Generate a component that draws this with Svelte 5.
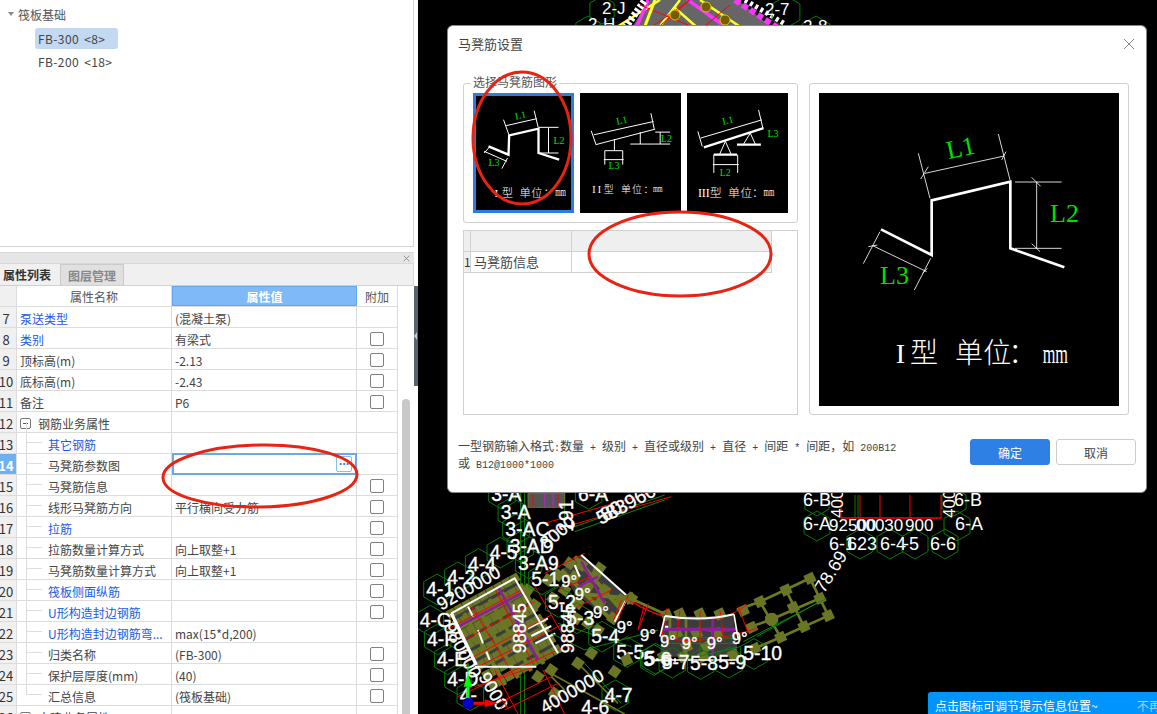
<script>
  // property rows: n = row no, name, val, link = blue label, level = tree depth, check = has checkbox
  const rows = [
    { n: 7, name: "泵送类型", val: "(混凝土泵)", link: true, level: 0, check: false },
    { n: 8, name: "类别", val: "有梁式", link: true, level: 0, check: true },
    { n: 9, name: "顶标高(m)", val: "-2.13", level: 0, check: true },
    { n: 10, name: "底标高(m)", val: "-2.43", level: 0, check: true },
    { n: 11, name: "备注", val: "P6", level: 0, check: true },
    { n: 12, name: "钢筋业务属性", val: "", level: 0, group: true, check: false },
    { n: 13, name: "其它钢筋", val: "", link: true, level: 1, check: false },
    { n: 14, name: "马凳筋参数图", val: "", level: 1, check: false, active: true },
    { n: 15, name: "马凳筋信息", val: "", level: 1, check: true },
    { n: 16, name: "线形马凳筋方向", val: "平行横向受力筋", level: 1, check: true },
    { n: 17, name: "拉筋", val: "", link: true, level: 1, check: true },
    { n: 18, name: "拉筋数量计算方式", val: "向上取整+1", level: 1, check: true },
    { n: 19, name: "马凳筋数量计算方式", val: "向上取整+1", level: 1, check: true },
    { n: 20, name: "筏板侧面纵筋", val: "", link: true, level: 1, check: true },
    { n: 21, name: "U形构造封边钢筋", val: "", link: true, level: 1, check: true },
    { n: 22, name: "U形构造封边钢筋弯...", val: "max(15*d,200)", link: true, level: 1, check: false },
    { n: 23, name: "归类名称", val: "(FB-300)", level: 1, check: true },
    { n: 24, name: "保护层厚度(mm)", val: "(40)", level: 1, check: true },
    { n: 25, name: "汇总信息", val: "(筏板基础)", level: 1, check: true, last: true },
    { n: 26, name: "土建业务属性", val: "", level: 0, group: true, check: false }
  ];

  const hex = (x, y, r) =>
    [0, 1, 2, 3, 4, 5]
      .map((i) => {
        const a = (Math.PI / 3) * i + Math.PI / 6;
        return `${(x + r * Math.cos(a)).toFixed(1)},${(y + r * Math.sin(a)).toFixed(1)}`;
      })
      .join(" ");

  // left sector of the drawing, coords are 3x page px from (418,490)
  const leftLabels = [
    ["3-A", 220, 32], ["6-A", 480, 32], ["3-A", 248, 88], ["3-AC", 262, 138], ["3-AD", 275, 190],
    ["3-A9", 300, 240], ["4-5", 215, 208], ["4-4", 150, 242], ["4-2", 88, 282], ["4-1", 25, 318],
    ["4-G", 5, 412], ["4-F", 27, 468], ["4-E", 57, 528], ["4-D", 88, 588], ["4-", 125, 636],
    ["5-1", 340, 288], ["5-2", 390, 356], ["5-3", 445, 405], ["5-4", 520, 460], ["5-5", 595, 506],
    ["5-6", 680, 526], ["4-7", 560, 636]
  ];
  const mainA = [100, 370], mainU = [190, -105], mainV = [125, 215];
  const leftBlocks = [];
  for (let i = 0; i <= 8; i++) {
    for (let j = 0; j <= 7; j++) {
      leftBlocks.push([
        mainA[0] + (mainU[0] * i) / 8 + (mainV[0] * j) / 7,
        mainA[1] + (mainU[1] * i) / 8 + (mainV[1] * j) / 7
      ]);
    }
  }
  const sectorBlocks = [
    [490, 225], [530, 260], [560, 300], [610, 330], [470, 260], [510, 290], [545, 340], [585, 385],
    [440, 300], [480, 340], [510, 400], [330, 300], [390, 270], [350, 345], [540, 420], [480, 520],
    [400, 540], [590, 545], [520, 490], [410, 610], [360, 560], [455, 220], [420, 255], [640, 325],
    [545, 235], [475, 385], [365, 395], [405, 325]
  ];

  // right sector, coords are 3x page px from (600,490)
  const rightLabels = [
    ["5-6", 130, 528], ["5-7", 185, 536], ["5-8", 270, 540], ["5-9", 355, 536], ["5-10", 430, 510]
  ];
  const degLabels = [[50, 428], [120, 452], [180, 472], [245, 478], [320, 478], [395, 462]];
  const rightBlocks = [
    [480, 335], [558, 300], [630, 265], [580, 352], [660, 325], [515, 388], [612, 410], [685, 377],
    [542, 442], [465, 475], [430, 362], [455, 412], [200, 375], [240, 372], [300, 372], [360, 372],
    [190, 500], [250, 500], [310, 500], [400, 495], [90, 325], [80, 510], [230, 430], [290, 430],
    [350, 430], [260, 470], [320, 470]
  ];
</script>

<div class="page">
  <aside class="left">
    <div class="left-main">
      <div class="tree">
        <div class="tree-root"><span class="caret"></span>筏板基础</div>
        <div class="tree-item selected">FB-300 &lt;8&gt;</div>
        <div class="tree-item">FB-200 &lt;18&gt;</div>
      </div>

      <div class="dock-bar">
        <svg class="dock-close" viewBox="0 0 10 10"><path d="M1 1l8 8M9 1l-8 8" /></svg>
      </div>
      <div class="tabs">
        <div class="tab active">属性列表</div>
        <div class="tab">图层管理</div>
      </div>

      <div class="table-wrap">
        <div class="table">
          <div class="row head">
            <div class="c-no"></div>
            <div class="c-name">属性名称</div>
            <div class="c-val hl">属性值</div>
            <div class="c-add">附加</div>
          </div>
          {#each rows as r}
            <div class="row">
              <div class="c-no" class:cur={r.active}>{r.n}</div>
              <div class="c-name cell" class:lv1={r.level === 1} class:link={r.link}>
                {#if r.level === 1}
                  <span class="branch" class:end={r.last}></span>
                {/if}
                {#if r.group}
                  <span class="minus"></span>
                {/if}
                {r.name}
              </div>
              <div class="c-val cell">
                {r.val}
                {#if r.active}
                  <span class="editor"><span class="more">...</span></span>
                {/if}
              </div>
              <div class="c-add">
                {#if r.check}<span class="check"></span>{/if}
              </div>
            </div>
          {/each}
        </div>
        <div class="scroll"><div class="thumb"></div></div>
      </div>
    </div>
    <div class="splitter">
      <div class="grip"></div>
    </div>
  </aside>

  <main class="canvas">
    <svg class="cad" viewBox="418 0 739 714">
      <!-- top part, mostly hidden by the dialog -->
      <polygon points="650,0 738,0 775,30 630,30" fill="#666" />
      <path d="M612,30L660,0M700,0L745,30M675,8L700,30M657,30L680,0" stroke="#ffff33" stroke-width="2.5" fill="none" />
      <path d="M648,0L636,28M688,0L730,30" stroke="#ff33ff" stroke-width="3.5" fill="none" />
      <path d="M735,0L778,28" stroke="#ff33ff" stroke-width="6" stroke-dasharray="6 3" fill="none" />
      <path d="M745,0L785,24" stroke="#fff" stroke-width="5" stroke-dasharray="3 3" fill="none" />
      <path d="M625,28L645,0" stroke="#fff" stroke-width="7" stroke-dasharray="3 2" fill="none" />
      <path d="M640,5L700,30M690,0L655,30M650,28L690,0M730,5L700,30" stroke="#f00" fill="none" />
      <path d="M655,0L645,26" stroke="#ffff33" stroke-width="3" fill="none" />
      <circle cx="675" cy="15" r="5" fill="#7a5a00" stroke="#cc0" />
      <circle cx="706" cy="7" r="5" fill="#7a5a00" stroke="#cc0" />
      <circle cx="725" cy="20" r="5" fill="#7a5a00" stroke="#cc0" />
      <g fill="none" stroke="#0a7a0a">
        <polygon points={hex(602, 10, 14)} />
        <polygon points={hex(588, 30, 14)} />
        <polygon points={hex(786, 12, 16)} />
        <polygon points={hex(816, 32, 16)} />
      </g>
      <g class="lbl" font-size="17">
        <text x="602" y="14">2-J</text>
        <text x="588" y="30">2-H</text>
        <text x="765" y="15">2-7</text>
        <text x="803" y="32">2-8</text>
      </g>

      <!-- 6-x axis block on the right -->
      <path d="M841,495V518H941V495M841,518H941M860,495V518M880,495V518M910,495V518" stroke="#f00" fill="none" />
      <path d="M855,495V518M858,495V518" stroke="#0a7a0a" fill="none" />
      <g fill="none" stroke="#0a7a0a">
        <polygon points={hex(817, 502, 14)} />
        <polygon points={hex(817, 526, 15)} />
        <polygon points={hex(957, 526, 15)} />
        <polygon points={hex(954, 502, 14)} />
        <polygon points={hex(945, 544, 15)} />
        <polygon points={hex(860, 544, 15)} />
        <polygon points={hex(890, 544, 15)} />
        <polygon points={hex(915, 544, 15)} />
      </g>
      <g class="lbl" font-size="18">
        <text x="803" y="506">6-B</text>
        <text x="803" y="530">6-A</text>
        <text x="954" y="506">6-B</text>
        <text x="955" y="530">6-A</text>
        <text x="829" y="531" font-size="17">92500</text>
        <text x="856" y="531" font-size="17">00030</text>
        <text x="905" y="531" font-size="17">900</text>
        <text x="829" y="550">6-1</text>
        <text x="847" y="550">623</text>
        <text x="880" y="550">6-4</text>
        <text x="903" y="550">-5</text>
        <text x="930" y="550">6-6</text>
        <text transform="translate(843 518) rotate(-90)" font-size="17">4000</text>
        <text transform="translate(955 518) rotate(-90)" font-size="17">4000</text>
        <text transform="translate(824 594) rotate(-58)" font-size="18">78.69</text>
      </g>

      <!-- left wing: radial grid and slabs -->
      <g transform="translate(418 490) scale(0.3333)">
        <path d="M380,100L760,-10M390,125L760,20M410,10L760,-50" stroke="#f00" stroke-width="3" fill="none" />
        <path d="M470,125L740,30M470,110L740,15" stroke="#0a8a0a" stroke-width="3" fill="none" />
        <path d="M308,0V672M320,0V672M440,0V120" stroke="#0a8a0a" stroke-width="3" fill="none" />
        <rect x="330" y="10" width="110" height="42" fill="#555" stroke="#6e7a1c" stroke-width="3" />
        <path d="M380,10V52M405,10V52" stroke="#a030b0" stroke-width="5" />
        <path d="M345,10V52M420,10V52" stroke="#f00" stroke-width="3" />

        <polygon points="100,370 290,265 415,480 355,525 170,525" fill="#3c3c3c" />
        <polygon points="490,195 630,325 590,400 470,310 430,240" fill="#3c3c3c" />
        <g stroke="#6e7a1c" stroke-width="12" fill="none">
          <path d="M125,413L315,308M150,456L340,351M175,499L365,394M138,370L262,585" />
          <path d="M176,349L301,564M214,328L340,543M252,307L377,522" />
          <path d="M430,240L590,400M470,200L610,360M470,310L630,325" />
        </g>
        {#each leftBlocks as b}
          <rect x={b[0] - 13} y={b[1] - 13} width="26" height="26" fill="#6b7526" transform="rotate(-29 {b[0]} {b[1]})" />
        {/each}
        {#each sectorBlocks as b}
          <rect x={b[0] - 15} y={b[1] - 15} width="30" height="30" fill="#6b7526" transform="rotate(35 {b[0]} {b[1]})" />
        {/each}
        <path d="M380,540L620,672M480,520L600,640M400,560L440,600" stroke="#6b7526" stroke-width="5" fill="none" />
        <path d="M240,290L360,510M490,215L560,340M120,410L310,310M480,290L540,260" stroke="#8a1f9c" stroke-width="8" fill="none" />
        <path d="M330,415L390,385M340,438L400,408M352,460L412,430M180,420L195,460M150,350L165,380M205,485L215,510M470,225L485,260" stroke="#fff" stroke-width="6" fill="none" />
        <g stroke="#f00" stroke-width="3" fill="none">
          <path d="M85,420L310,300M110,465L350,335M140,515L400,375M170,535L440,400" />
          <path d="M160,350L290,560M230,295L350,530M290,265L420,490M340,270L460,480" />
          <path d="M120,620L440,470M170,590L350,530M240,640L400,560M260,660L420,580M230,540L300,672M375,540L440,672" />
          <path d="M380,250L500,190M420,300L520,260M460,360L580,300M490,195L640,330C680,360 720,375 750,385M680,340L660,420M610,330L585,395" />
        </g>
        <g stroke="#fff" stroke-width="6" fill="none">
          <path d="M100,370L290,265L420,490M170,530H355M490,195L630,320L590,395" />
        </g>
        <path d="M100,370L175,525" stroke="#fff" stroke-width="10" />
        <g fill="none" stroke="#0a7a0a" stroke-width="3">
          {#each leftLabels as l}
            <polygon points={hex(l[1] + 32, l[2] - 20, 46)} />
          {/each}
        </g>
        <path d="M400,430L500,480L720,420M420,400L640,470M500,520L610,640" stroke="#0a8a0a" stroke-width="3" fill="none" />
        <g class="lbl heavy" font-size="58">
          {#each leftLabels as l}
            <text x={l[1]} y={l[2]}>{l[0]}</text>
          {/each}
          <text transform="translate(70 362) rotate(-30)" font-size="54">9200000</text>
          <text transform="translate(75 410) rotate(62)" font-size="54">980000</text>
          <text transform="translate(180 560) rotate(60)" font-size="54">9000</text>
          <text transform="translate(385 180) rotate(-40)" font-size="54">8000</text>
          <text transform="translate(380 672) rotate(-30)" font-size="54">4000000</text>
          <text transform="translate(548 105) rotate(-28)" font-size="58">583960</text>
          <text transform="translate(560 95) rotate(-28)" font-size="58">80</text>
          <text transform="translate(465 125) rotate(-90)" font-size="58">191</text>
          <text transform="translate(325 490) rotate(-90)" font-size="54">98845</text>
          <text transform="translate(468 490) rotate(-90)" font-size="54">98845</text>
          <text x="430" y="290" font-size="50">9°</text>
          <text x="470" y="330" font-size="50">9°</text>
          <text x="525" y="385" font-size="50">9°</text>
          <text x="490" y="672">4-6</text>
        </g>

        <!-- axis gizmo -->
        <path d="M150,640V590" stroke="#00ff00" stroke-width="9" />
        <polygon points="150,552 137,590 163,590" fill="#00ff00" />
        <path d="M150,555V520" stroke="#00ff00" stroke-width="3" />
        <path d="M150,640H200" stroke="#ff0000" stroke-width="9" />
        <polygon points="240,640 200,628 200,652" fill="#ff0000" />
        <circle cx="150" cy="640" r="17" fill="#0000c8" />
        <path d="M248,625L270,655M270,625L248,655" stroke="#ff0000" stroke-width="3" />
      </g>

      <!-- arc wing -->
      <g transform="translate(600 490) scale(0.3333)">
        <polygon points="190,380 400,378 415,500 180,500" fill="#3c3c3c" />
        <g stroke="#6e7a1c" stroke-width="8" fill="none">
          <path d="M258,385V500M210,385V450M320,420H390" />
          <path d="M480,335L630,265M515,388L660,325M542,442L685,377M480,335L542,442M558,300L612,410M630,265L685,377" />
          <path d="M90,325L190,370M410,360L480,335M440,415L515,388M465,475L542,442" />
        </g>
        {#each rightBlocks as b}
          <rect x={b[0] - 15} y={b[1] - 15} width="30" height="30" fill="#6b7526" transform="rotate(-25 {b[0]} {b[1]})" />
        {/each}
        <circle cx="515" cy="388" r="20" fill="#6b7526" />
        <path d="M190,418H412" stroke="#8a1f9c" stroke-width="10" />
        <path d="M338,385V500" stroke="#8a1f9c" stroke-width="9" />
        <g stroke="#0a8a0a" stroke-width="3" fill="none">
          <path d="M185,440L410,445M190,460L420,460M250,510L420,470M470,440L650,340M430,455L680,325M300,400V500" />
        </g>
        <g stroke="#f00" stroke-width="3" fill="none">
          <path d="M85,330C140,365 190,385 300,388C360,388 400,375 440,345" />
          <path d="M180,440C240,458 340,458 470,415" />
          <path d="M145,340L115,420M200,355L185,445M240,360L230,450M300,365V455M360,362L372,455M415,350L445,430M85,315L50,395" />
        </g>
        <path d="M195,378C260,388 340,388 402,373" stroke="#fff" stroke-width="6" fill="none" />
        <path d="M402,373L414,445M195,378L180,440M180,510H415" stroke="#fff" stroke-width="5" fill="none" />
        <path d="M195,410H205M225,505V515" stroke="#fff" stroke-width="6" />
        <g fill="none" stroke="#0a7a0a" stroke-width="3">
          {#each rightLabels as l}
            <polygon points={hex(l[1] + 32, l[2] - 18, 46)} />
          {/each}
        </g>
        <g class="lbl heavy" font-size="58">
          {#each rightLabels as l}
            <text x={l[1]} y={l[2]}>{l[0]}</text>
          {/each}
          {#each degLabels as d}
            <text x={d[0]} y={d[1]} font-size="50">9°</text>
          {/each}
        </g>
      </g>
    </svg>

    <div class="toast">
      <span>点击图标可调节提示信息位置~</span>
      <span class="toast-off">不再提示</span>
    </div>
  </main>

  <section class="dialog">
    <header class="dlg-head">
      <span>马凳筋设置</span>
      <svg class="dlg-close" viewBox="0 0 12 12"><path d="M1 1l10 10M11 1l-10 10" /></svg>
    </header>

    <div class="dlg-body">
      <div class="dlg-left">
        <div class="group">
          <span class="legend">选择马凳筋图形</span>
          <div class="shapes">
            <div class="shape picked">
              <svg viewBox="88 214 284 342">
                <path class="thick" d="M125,365L185,390L187,332L275,312V385L337,405" />
                <path class="thin" d="M178,303L270,282M170,285L186,330M262,258L274,308M275,308H335M278,385H335M305,310V385M112,385L130,365M112,380L180,410M182,400L165,432" />
                <text class="dim" x="207" y="285" transform="rotate(-12 207 285)">L1</text>
                <text class="dim" x="320" y="357">L2</text>
                <text class="dim" x="125" y="425">L3</text>
                <text class="cap" x="143 165 200 218 253 290" y="517" font-size="34">I型 单位：</text>
                <text class="cap" transform="translate(325 513) scale(.58 1)" font-size="36">mm</text>
              </svg>
            </div>
            <div class="shape">
              <svg viewBox="399 204 303 362">
                <path class="thin" d="M440,330L620,290M445,360L625,313M432,318L446,358M612,265L622,312M502,343V378M473,378H527M473,378V420M527,378V420M470,405H530M580,322V358M550,358H625M625,322H670M625,358H670M640,322V358" />
                <text class="dim" x="510" y="300" transform="rotate(-12 510 300)">L1</text>
                <text class="dim" x="642" y="353">L2</text>
                <text class="dim" x="484" y="433">L3</text>
                <text class="cap" x="435 452 470 505 522 555 590" y="505" font-size="30">II型 单位：</text>
                <text class="cap" transform="translate(618 502) scale(.58 1)" font-size="32">mm</text>
              </svg>
            </div>
            <div class="shape">
              <svg viewBox="720 204 303 362">
                <path class="thin" d="M760,340L945,285M752,320L765,365M935,255L948,310M818,388L835,350L852,388M800,390V445M872,390V445M797,420H875M890,358L910,325L925,358" />
                <path class="thick" d="M770,368L950,310M800,390H870M870,360H942" />
                <text class="dim" x="828" y="300" transform="rotate(-12 828 300)">L1</text>
                <text class="dim" x="818" y="455">L2</text>
                <text class="dim" x="962" y="338">L3</text>
                <text class="cap" x="752 764 776 788 825 843 880 915" y="518" font-size="36">III型 单位：</text>
                <text class="cap" transform="translate(950 514) scale(.58 1)" font-size="36">mm</text>
              </svg>
            </div>
          </div>
        </div>

        <div class="grid-box">
          <div class="g-row g-head">
            <div class="g-no"></div>
            <div class="g-name"></div>
            <div class="g-val"></div>
          </div>
          <div class="g-row">
            <div class="g-no">1</div>
            <div class="g-name">马凳筋信息</div>
            <div class="g-val"></div>
          </div>
        </div>
      </div>

      <div class="preview">
        <svg viewBox="57 204 900 939">
          <path class="big" d="M243,613L395,690V526L631,470V670L793,727" />
          <path class="hair" d="M375,445L612,393M355,385L390,520M595,327L630,465M362,462L385,425M605,405L618,380M645,471H785M645,670H785M710,471V670M695,457L722,484M695,656L720,680M218,662L380,740M240,620L190,716M392,700L343,795M205,665L232,660M368,745L382,730" />
          <text class="big-dim" x="445" y="403" transform="rotate(-12 445 403)">L1</text>
          <text class="big-dim" x="750" y="592">L2</text>
          <text class="big-dim" x="240" y="778">L3</text>
          <text class="big-cap" x="287 330 420 465 550 625" y="1015">I型 单位：</text>
          <text class="big-cap" transform="translate(728 1015) scale(.58 1)" font-size="105">mm</text>
        </svg>
      </div>
    </div>

    <footer class="dlg-foot">
      <p class="hint">一型钢筋输入格式<span class="lat">:</span>数量<span class="lat">{" + "}</span>级别<span class="lat">{" + "}</span>直径或级别<span class="lat">{" + "}</span>直径<span class="lat">{" + "}</span>间距<span class="lat">{" * "}</span>间距，如<span class="lat">{" 200B12"}</span><br />或<span class="lat">{" B12@1000*1000"}</span></p>
      <div class="btns">
        <button class="btn primary">确定</button>
        <button class="btn">取消</button>
      </div>
    </footer>
  </section>

  <svg class="marks" viewBox="0 0 1157 714">
    <ellipse cx="522" cy="138" rx="49" ry="66" />
    <ellipse cx="680" cy="254" rx="91" ry="42" />
    <ellipse cx="260" cy="476" rx="97" ry="31" transform="rotate(-1 260 476)" />
  </svg>
</div>

<style>
  :global(body) {
    margin: 0;
    background: #000;
  }

  .page {
    position: relative;
    display: flex;
    width: 1157px;
    height: 714px;
    overflow: hidden;
    font-family: "Noto Sans CJK SC", "Noto Sans", sans-serif;
    font-size: 12px;
    color: #333;
  }

  /* left dock */
  .left {
    display: flex;
    width: 418px;
    flex-shrink: 0;
    background: #fff;
  }

  .left-main {
    width: 414px;
    display: flex;
    flex-direction: column;
    overflow: hidden;
  }

  .tree {
    height: 247px;
    box-sizing: border-box;
    border-right: 1px solid #d4d4d4;
    border-bottom: 1px solid #d4d4d4;
    flex-shrink: 0;
  }

  .tree-root {
    display: flex;
    align-items: center;
    height: 16px;
    margin-top: 6px;
    padding-left: 8px;
    gap: 4px;
    color: #555;
  }

  .caret {
    width: 0;
    height: 0;
    border-left: 3px solid transparent;
    border-right: 3px solid transparent;
    border-top: 4px solid #888;
  }

  .tree-item {
    display: flex;
    align-items: center;
    width: 83px;
    height: 21px;
    box-sizing: border-box;
    margin: 2px 0 0 35px;
    padding-left: 3px;
    border-radius: 3px;
    white-space: nowrap;
    color: #444;
    letter-spacing: 0.4px;
    word-spacing: 2px;
  }

  .tree-root + .tree-item {
    margin-top: 6px;
  }

  .selected {
    background: #c2d9f1;
  }

  .dock-bar {
    height: 12px;
    margin-top: 5px;
    display: flex;
    justify-content: flex-end;
    align-items: center;
    box-sizing: border-box;
    padding-right: 4px;
    background: #e6e6e6;
    border-top: 1px solid #d8d8d8;
    border-bottom: 1px solid #d8d8d8;
    flex-shrink: 0;
  }

  .dock-close {
    width: 7px;
    height: 7px;
    fill: none;
    stroke: #888;
    stroke-width: 1.2;
  }

  .tabs {
    display: flex;
    height: 22px;
    box-sizing: border-box;
    background: #f0f0f0;
    border-right: 1px solid #d8d8d8;
    border-bottom: 1px solid #d0d0d0;
    flex-shrink: 0;
  }

  .tab {
    display: flex;
    align-items: center;
    justify-content: center;
    width: 64px;
    background: #e0e0e0;
    border: 1px solid #cacaca;
    border-bottom: 0;
    box-sizing: border-box;
    color: #888;
    font-weight: 700;
  }

  .tab.active {
    width: 60px;
    padding-right: 6px;
    background: #f0f0f0;
    border: 0;
    color: #333;
  }

  .table-wrap {
    display: flex;
    flex: 1;
    min-height: 0;
  }

  .table {
    width: 398px;
    flex-shrink: 0;
  }

  .row {
    display: grid;
    grid-template-columns: 17px 155px 185px 41px;
    height: 21px;
    box-sizing: border-box;
    border-bottom: 1px solid #dcdcdc;
  }

  .row > div {
    display: flex;
    align-items: center;
    box-sizing: border-box;
    padding-top: 2px;
    border-right: 1px solid #dcdcdc;
    white-space: nowrap;
  }

  .row .c-no {
    justify-content: center;
    padding-right: 4px;
    background: #f0f0f0;
    font-size: 13px;
    overflow: hidden;
  }

  .row .c-no.cur {
    background: #6fb0ef;
    color: #fff;
    font-weight: 700;
  }

  .row.head > div {
    justify-content: center;
    padding-top: 0;
    color: #555;
  }

  .row.head .hl {
    background: #7fb9f8;
    border: 1px solid #62a6ec;
    color: #fff;
    font-weight: 700;
  }

  .row .cell {
    position: relative;
    padding-left: 3px;
    color: #444;
  }

  .row .cell.lv1 {
    padding-left: 31px;
  }

  .row .cell.link {
    color: #1a5ae8;
  }

  .branch {
    position: absolute;
    left: 9px;
    top: -11px;
    width: 16px;
    height: 21px;
    box-sizing: border-box;
    border-left: 1px solid #dcdcdc;
    border-bottom: 1px solid #dcdcdc;
  }

  .minus {
    position: relative;
    width: 11px;
    height: 11px;
    margin-right: 7px;
    box-sizing: border-box;
    border: 1px solid #777;
    border-radius: 2px;
  }

  .minus::after {
    content: "";
    position: absolute;
    left: 2px;
    right: 2px;
    top: 4px;
    height: 1px;
    background: #555;
  }

  .editor {
    position: absolute;
    inset: -1px -1px -1px 0;
    border: 2px solid #6aa8e6;
    background: #fff;
  }

  .more {
    position: absolute;
    right: 3px;
    top: 1px;
    width: 16px;
    height: 16px;
    box-sizing: border-box;
    border: 1px solid #8dbcee;
    border-radius: 2px;
    color: #2a7de1;
    font-weight: 700;
    font-size: 11px;
    line-height: 6px;
    text-align: center;
  }

  .row .c-add {
    justify-content: center;
  }

  .check {
    width: 14px;
    height: 14px;
    box-sizing: border-box;
    border: 1px solid #808080;
    border-radius: 2px;
  }

  .scroll {
    flex: 1;
    padding: 113px 4px 0 4px;
  }

  .thumb {
    height: 400px;
    background: #c8c8c8;
    border-radius: 4px 4px 0 0;
  }

  .splitter {
    width: 4px;
    padding-top: 286px;
    box-sizing: border-box;
  }

  .grip {
    position: relative;
    height: 100px;
    background: #5a6470;
  }

  .grip::after {
    content: "";
    position: absolute;
    top: 46px;
    left: 0;
    border-top: 4px solid transparent;
    border-bottom: 4px solid transparent;
    border-right: 3px solid #c4c8cc;
  }

  /* cad view */
  .canvas {
    position: relative;
    flex: 1;
    background: #000;
  }

  .cad {
    display: block;
    width: 739px;
    height: 714px;
  }

  .lbl {
    fill: #fff;
    font-family: "Liberation Sans", sans-serif;
  }

  .heavy {
    stroke: #fff;
    stroke-width: 1;
  }

  .toast {
    position: absolute;
    right: 0;
    bottom: 0;
    display: flex;
    width: 229px;
    height: 22px;
    box-sizing: border-box;
    padding: 5px 0 0 7px;
    background: #0094ff;
    border-radius: 3px 0 0 0;
    color: #fff;
    font-size: 12px;
    overflow: hidden;
    white-space: nowrap;
  }

  .toast-off {
    margin-left: 39px;
    color: #9fd4ff;
    flex-shrink: 0;
  }

  /* dialog */
  .dialog {
    position: absolute;
    left: 447px;
    top: 25px;
    display: flex;
    flex-direction: column;
    width: 700px;
    height: 468px;
    box-sizing: border-box;
    padding: 0 10px 0 15px;
    background: #fff;
    border: 1px solid #888;
    border-radius: 6px;
  }

  .dlg-head {
    display: flex;
    align-items: center;
    justify-content: space-between;
    height: 35px;
    margin-left: -5px;
    padding-right: 1px;
    font-size: 13px;
    color: #444;
  }

  .dlg-close {
    width: 12px;
    height: 12px;
    fill: none;
    stroke: #888;
    stroke-width: 1;
  }

  .dlg-body {
    display: flex;
    gap: 11px;
    margin-top: 22px;
    padding-right: 7px;
  }

  .dlg-left {
    display: flex;
    flex-direction: column;
    gap: 7px;
    width: 335px;
  }

  .group {
    position: relative;
    height: 140px;
    box-sizing: border-box;
    padding: 9px 9px;
    border: 1px solid #d0d0d0;
    border-radius: 3px;
  }

  .legend {
    position: absolute;
    left: 7px;
    top: -10px;
    padding: 0 2px;
    background: #fff;
    color: #555;
    line-height: 16px;
  }

  .shapes {
    display: flex;
    gap: 6px;
  }

  .shape {
    width: 101px;
    height: 120px;
    box-sizing: border-box;
    background: #000;
  }

  .shape.picked {
    border: 3px solid #2a7de1;
  }

  .shape svg {
    display: block;
    width: 100%;
    height: 100%;
  }

  .thick,
  .thin,
  .big,
  .hair {
    fill: none;
    stroke: #fff;
  }

  .thick {
    stroke-width: 7;
  }

  .thin {
    stroke-width: 3;
  }

  .big {
    stroke-width: 8;
  }

  .hair {
    stroke-width: 2.5;
  }

  .dim {
    fill: #00e000;
    font-family: "Liberation Serif", serif;
    font-size: 30px;
  }

  .cap,
  .big-cap {
    fill: #fff;
    font-family: "Liberation Serif", "Noto Sans CJK SC", serif;
    font-weight: 300;
  }

  .big-dim {
    fill: #00e000;
    font-family: "Liberation Serif", serif;
    font-size: 78px;
  }

  .big-cap {
    font-size: 84px;
  }

  .grid-box {
    height: 185px;
    box-sizing: border-box;
    border: 1px solid #d0d0d0;
  }

  .g-row {
    display: grid;
    grid-template-columns: 7px 101px 200px;
    width: 308px;
    height: 21px;
    box-sizing: border-box;
    border-bottom: 1px solid #d0d0d0;
    font-size: 13px;
    line-height: 20px;
  }

  .g-row > div {
    border-right: 1px solid #d0d0d0;
    white-space: nowrap;
  }

  .g-head {
    background: #efefef;
  }

  .g-no {
    background: #efefef;
    font-size: 12px;
    overflow: hidden;
  }

  .g-name {
    padding-left: 3px;
    color: #444;
  }

  .preview {
    width: 320px;
    height: 332px;
    box-sizing: border-box;
    padding: 9px;
    border: 1px solid #d0d0d0;
    border-radius: 3px;
  }

  .preview svg {
    display: block;
    width: 300px;
    height: 313px;
    background: #000;
  }

  .dlg-foot {
    display: flex;
    justify-content: space-between;
    margin: 13px 0 0 -5px;
  }

  .hint {
    margin: 0;
    padding-top: 11px;
    font-size: 12px;
    line-height: 14px;
    color: #444;
    white-space: nowrap;
  }

  .lat {
    font-family: "Liberation Mono", monospace;
    font-size: 10px;
    white-space: pre;
  }

  .btns {
    display: flex;
    gap: 6px;
    padding-top: 11px;
  }

  .btn {
    width: 80px;
    height: 26px;
    padding: 0;
    background: #fff;
    border: 1px solid #ccc;
    border-radius: 3px;
    font: inherit;
    color: #444;
  }

  .btn.primary {
    background: #2f80e4;
    border-color: #2f80e4;
    color: #fff;
  }

  /* red hand drawn circles on top of everything */
  .marks {
    position: absolute;
    inset: 0;
    width: 1157px;
    height: 714px;
    pointer-events: none;
    fill: none;
    stroke: #e82312;
    stroke-width: 3;
  }
</style>
